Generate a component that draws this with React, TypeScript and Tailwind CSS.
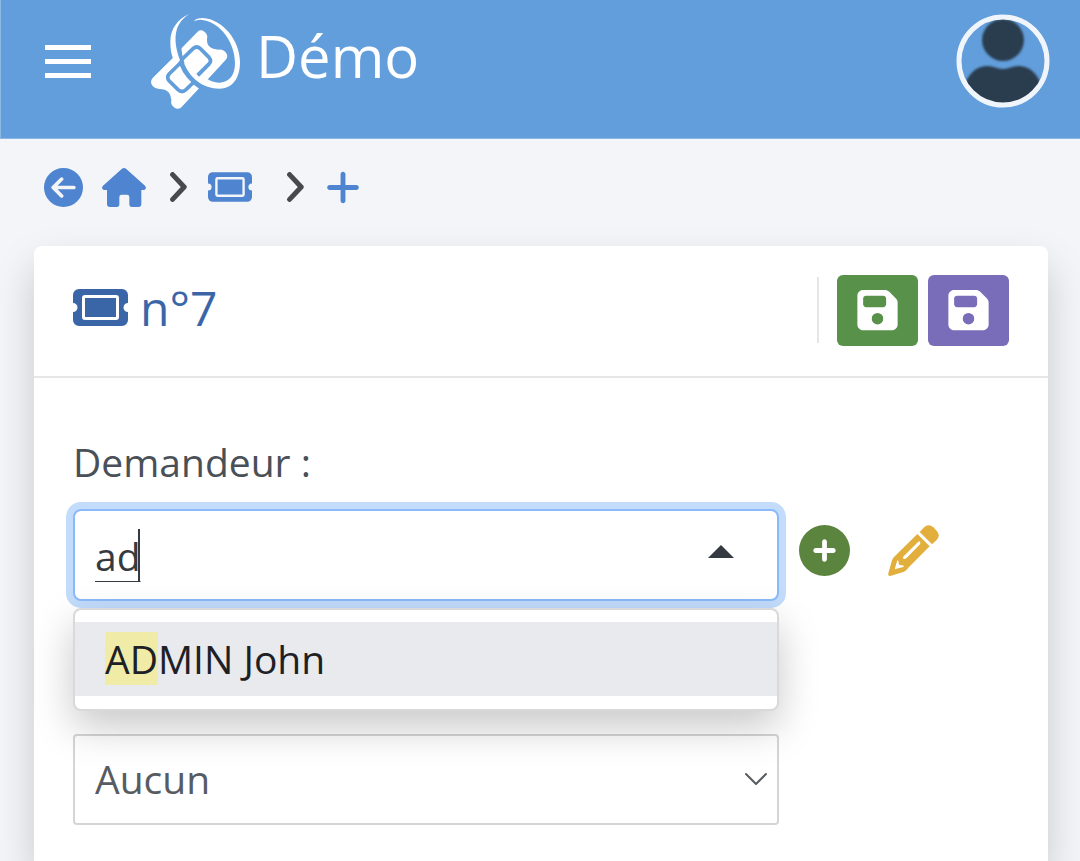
import { useState } from 'react';
import { FaCircleArrowLeft, FaCirclePlus, FaFloppyDisk, FaPlus } from 'react-icons/fa6';

const users = ['ADMIN John'];

function Logo() {
  return (
    <svg viewBox="0 0 330 345" className="h-[115px] w-[110px]" aria-hidden="true">
      {/* ticket */}
      <path
        fill="#fff"
        d="M120 137L170 86Q181 73 193 83Q205 92 201 106Q200 136 236 137Q250 135 259 148Q266 158 256 169L202 227L178 252L127 307Q115 321 101 309Q91 301 94 288Q92 256 61 255Q48 257 38 246Q28 234 38 222L99 161Z"
      />
      <path
        fill="none"
        stroke="#629edb"
        strokeWidth="11"
        d="M126 166L159 134Q170 124 181 134L207 160Q216 171 207 180L174 213M121 177L88 209Q78 220 88 231L114 257Q126 268 138 257L168 228"
      />
      <path fill="none" stroke="#629edb" strokeWidth="16" d="M115 112Q116 150 125 178Q142 222 188 252" />
      {/* loop */}
      <path
        fill="#fff"
        d="M147 30C112 46 91 76 91 112C91 136 94 152 100 166L112 177L120 169C107 134 103 103 110 78C116 58 128 43 147 30Z"
      />
      <path
        fill="#fff"
        d="M162 52C166 45 176 42 188 42C250 45 300 112 300 174C300 222 278 254 238 254C190 254 147 220 132 176L150 186L174 216L203 226C214 233 226 236 240 236C268 234 285 214 285 178C285 116 242 56 188 48Q173 46 162 52Z"
      />
      <path fill="none" stroke="#629edb" strokeWidth="11" d="M173 214L207 180" />
    </svg>
  );
}

function Avatar() {
  return (
    <svg viewBox="0 0 94 94" className="size-[94px]" aria-hidden="true">
      <defs>
        <clipPath id="avatar-clip">
          <circle cx="47" cy="47" r="43" />
        </clipPath>
        <filter id="avatar-soft">
          <feGaussianBlur stdDeviation="0.8" />
        </filter>
      </defs>
      <g clipPath="url(#avatar-clip)">
        <g fill="#2c3e50" filter="url(#avatar-soft)">
          <circle cx="47" cy="26" r="21" />
          <path d="M7 98V80C9 62 19 52 32 52C38 52 41 55 47 55C53 55 56 52 62 52C75 52 85 62 87 80V98Z" />
        </g>
      </g>
      <circle cx="47" cy="47" r="44" fill="none" stroke="#eff5fb" strokeWidth="5" />
    </svg>
  );
}

function Ticket({ className }: { className: string }) {
  return (
    <svg viewBox="0 0 55 37" className={className} fill="currentColor" aria-hidden="true">
      <path
        fillRule="evenodd"
        d="M6 0H49A6 6 0 0 1 55 6V14A4.5 4.5 0 0 0 55 23V31A6 6 0 0 1 49 37H6A6 6 0 0 1 0 31V23A4.5 4.5 0 0 0 0 14V6A6 6 0 0 1 6 0ZM12 6A3 3 0 0 0 9 9V28A3 3 0 0 0 12 31H43A3 3 0 0 0 46 28V9A3 3 0 0 0 43 6ZM12 9H43V28H12Z"
      />
    </svg>
  );
}

function House() {
  return (
    <svg viewBox="0 0 132 117" className="h-[39px] w-11" fill="currentColor" aria-hidden="true">
      <path d="M59 3Q66 -3 73 3L129 53Q133 57 131 62Q129 66 124 66H118V108Q118 117 109 117H90Q82 117 82 109V87Q82 80 75 80H59Q52 80 52 87V109Q52 117 44 117H24Q15 117 15 108V66H8Q3 66 1 62Q-1 57 3 53Z" />
    </svg>
  );
}

function Chevron({ className }: { className: string }) {
  return (
    <svg viewBox="0 0 17 30" className={`h-[30px] w-[17px] text-[#464a4e] ${className}`} aria-hidden="true">
      <path
        d="M2.6 2.6L14.2 15L2.6 27.4"
        fill="none"
        stroke="currentColor"
        strokeWidth="5"
        strokeLinecap="round"
        strokeLinejoin="round"
      />
    </svg>
  );
}

function Pencil() {
  return (
    <svg viewBox="0 0 153 153" className="size-[51px]" fill="currentColor" aria-hidden="true">
      <path d="M107 8Q121 -6 136 7L146 17Q159 32 145 46L132 58L95 21Z" />
      <path
        fillRule="evenodd"
        d="M88 27L125 64L61 128Q56 136 48 140L9 152Q-1 155 1 145L12 106Q14 98 21 93ZM91 50L47 94Q43 99 47 101Q50 104 55 100L96 58Q98 53 96 50Q94 48 91 50ZM28 106L20 133L46 126Q50 121 42 121L35 120Q32 119 32 115Q33 106 28 106Z"
      />
    </svg>
  );
}

export default function App() {
  const [search, setSearch] = useState('ad');
  const [group, setGroup] = useState('');

  return (
    <div className="flex min-h-screen flex-col overflow-hidden bg-[#f3f5f9] font-['Open_Sans',sans-serif] text-[#495057]">
      <header className="flex h-[139px] items-center border-b border-l border-[#8bb8e4] bg-[#629edb] pr-[30px] pb-4 pl-11 text-white">
        <button type="button" aria-label="Menu" className="flex w-[46px] flex-col gap-[9px]">
          <span className="h-[5px] bg-white" />
          <span className="h-[5px] bg-white" />
          <span className="h-[5px] bg-white" />
        </button>
        <a href="#" className="ml-[49px] flex items-center gap-[6px]">
          <Logo />
          <span className="pb-[10px] text-[58px] leading-[60px]">Démo</span>
        </a>
        <button type="button" aria-label="Profil" className="ml-auto">
          <Avatar />
        </button>
      </header>

      <nav aria-label="Fil d'Ariane" className="flex h-[107px] items-center pb-[11px] pl-11 text-[#4f84d1]">
        <a href="#" aria-label="Retour">
          <FaCircleArrowLeft className="size-[39px]" />
        </a>
        <a href="#" aria-label="Accueil" className="ml-[19px]">
          <House />
        </a>
        <Chevron className="ml-6" />
        <a href="#" aria-label="Tickets" className="ml-[21px]">
          <Ticket className="h-[30px] w-11" />
        </a>
        <Chevron className="ml-[35px]" />
        <a href="#" aria-label="Nouveau" className="ml-[22px]">
          <FaPlus className="h-[39px] w-[34px]" />
        </a>
      </nav>

      <main className="mr-8 ml-[34px] flex-1 rounded-t-lg bg-white shadow-[0_20px_40px_rgba(0,0,0,0.18)]">
        <div className="flex h-[132px] items-center border-b-2 border-[#e6e6e6] px-[39px] pb-[2px]">
          <h1 className="flex items-center gap-3 pb-[5px] text-[48px] leading-[60px] text-[#3a66a8]">
            <Ticket className="h-[37px] w-[55px]" />
            n°7
          </h1>
          <div className="ml-auto flex items-center gap-[10px]">
            <div className="mr-2 h-[66px] w-[2px] bg-[#e6e6e6]" />
            <button
              type="button"
              aria-label="Enregistrer"
              className="flex h-[71px] w-[81px] items-center justify-center rounded-md bg-[#58924a] text-white"
            >
              <FaFloppyDisk className="h-[46px] w-[41px]" />
            </button>
            <button
              type="button"
              aria-label="Enregistrer et fermer"
              className="flex h-[71px] w-[81px] items-center justify-center rounded-md bg-[#796cb9] text-white"
            >
              <FaFloppyDisk className="h-[46px] w-[41px]" />
            </button>
          </div>
        </div>

        <form className="px-[39px] pt-[58px]">
          <label htmlFor="requester" className="block text-[39px] leading-[52px]">
            Demandeur :
          </label>
          <div className="mt-[21px] grid grid-cols-[1fr_230px] items-center">
            <div className="relative">
              <input
                id="requester"
                type="text"
                role="combobox"
                aria-expanded="true"
                aria-controls="requester-list"
                autoComplete="off"
                value={search}
                onChange={(e) => setSearch(e.target.value)}
                className="block h-[92px] w-full rounded-lg border-2 border-[#8bbafa] bg-white px-5 text-[39px] text-[#343a40] underline decoration-2 underline-offset-[10px] caret-transparent ring-[7px] ring-[#c3dcfc] outline-none"
              />
              <span className="absolute top-5 left-[65px] h-[52px] w-[2px] bg-[#343a40]" />
              <svg viewBox="0 0 26 13" className="absolute top-9 right-[45px] h-[13px] w-[26px] fill-[#343a40]">
                <path d="M0 13L13 0L26 13Z" />
              </svg>
              <ul
                id="requester-list"
                role="listbox"
                className="absolute top-[99px] left-0 z-10 w-full rounded-lg border-2 border-[#d9d9d9] bg-white pt-3 pb-[13px] shadow-[0_16px_40px_rgba(0,0,0,0.22)]"
              >
                {users.map((user) => (
                  <li
                    key={user}
                    role="option"
                    aria-selected="true"
                    className="bg-[#e9eaee] px-[30px] py-[10px] text-[39px] leading-[54px] text-[#1d2125]"
                  >
                    <mark className="rounded-xs bg-[#f0eca8] text-inherit">{user.slice(0, search.length)}</mark>
                    {user.slice(search.length)}
                  </li>
                ))}
              </ul>
            </div>
            <div className="flex items-center gap-[38px] pb-[10px] pl-5">
              <button type="button" aria-label="Ajouter un demandeur" className="text-[#5b843f]">
                <FaCirclePlus className="size-[51px]" />
              </button>
              <button type="button" aria-label="Modifier le demandeur" className="text-[#e2ae3c]">
                <Pencil />
              </button>
            </div>
          </div>

          <div className="mt-[133px] grid grid-cols-[1fr_230px]">
            <div className="relative">
              <select
                aria-label="Groupe"
                value={group}
                onChange={(e) => setGroup(e.target.value)}
                className="block h-[91px] w-full appearance-none rounded-sm border-2 border-[#d3d5d7] bg-white px-5 text-[39px] text-[#565c62]"
              >
                <option value="">Aucun</option>
              </select>
              <svg
                viewBox="0 0 24 14"
                className="pointer-events-none absolute top-[38px] right-[11px] h-[14px] w-6 fill-none stroke-[#565c62] stroke-2"
              >
                <path d="M2 2L12 12L22 2" strokeLinecap="round" strokeLinejoin="round" />
              </svg>
            </div>
          </div>
        </form>
      </main>
    </div>
  );
}
